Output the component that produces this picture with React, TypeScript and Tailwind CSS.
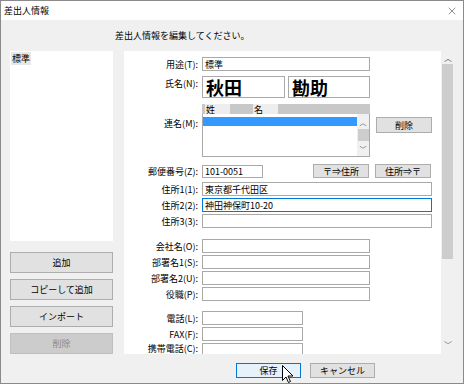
import { X } from "lucide-react";

const font = { fontFamily: '"Noto Sans CJK JP", "Noto Sans", sans-serif' };

function Field({
  label,
  width,
  value,
  focused,
  mt,
  lift,
}: {
  label: string;
  width: string;
  value?: string;
  focused?: boolean;
  mt: string;
  lift?: boolean;
}) {
  return (
    <div className={`flex items-center h-[14px] ${mt}`}>
      <div
        className={`w-[76px] text-right pr-[2px] leading-none ${
          lift ? "-mt-[3px]" : ""
        }`}
      >
        {label}
      </div>
      <div
        className={`h-[14px] ml-[2px] bg-white border px-[2px] flex items-center leading-none ${width} ${
          focused ? "border-[#0078d7]" : "border-[#a9a9a9]"
        }`}
      >
        {value}
      </div>
    </div>
  );
}

function Btn({ label, cls }: { label: string; cls: string }) {
  return (
    <div
      className={`flex items-center justify-center border leading-none ${cls}`}
    >
      {label}
    </div>
  );
}

export default function App() {
  return (
    <div
      style={font}
      className="relative w-[464px] h-[384px] border border-[#8a8a8a] flex flex-col text-[9px] text-black bg-[#f0f0f0] overflow-hidden"
    >
      <div className="h-[19px] bg-white flex items-center justify-between pl-[3px] pr-[5px]">
        <span className="text-[9px]">差出人情報</span>
        <X size={12} strokeWidth={1} color="#222" />
      </div>

      <div className="pl-[114px] pt-[10px] leading-[12px]">
        差出人情報を編集してください。
      </div>

      <div className="flex mt-[9px] pl-[9px] h-[303px]">
        <div className="w-[103px] flex flex-col">
          <div className="h-[190px] bg-white pt-[1px] pl-[1px]">
            <span className="bg-[#e8e8e8] px-[1px] leading-[10px]">標準</span>
          </div>
          <div className="flex flex-col gap-[6px] mt-[11px]">
            <Btn label="追加" cls="h-[21px] bg-[#e1e1e1] border-[#adadad]" />
            <Btn
              label="コピーして追加"
              cls="h-[21px] bg-[#e1e1e1] border-[#adadad]"
            />
            <Btn
              label="インポート"
              cls="h-[21px] bg-[#e1e1e1] border-[#adadad]"
            />
            <Btn
              label="削除"
              cls="h-[21px] bg-[#cccccc] border-[#bfbfbf] text-[#8a8a8a]"
            />
          </div>
        </div>

        <div className="ml-[11px] w-[334px] flex">
          <div className="w-[317px] bg-white overflow-hidden flex flex-col">
            <Field label="用途(T):" width="w-[168px]" value="標準" mt="mt-[6px]" />

            <div className="flex mt-[5px] h-[22px]">
              <div className="w-[76px] text-right pr-[2px] pt-[3px] leading-none">
                氏名(N):
              </div>
              <div className="ml-[2px] w-[83px] h-[22px] border border-[#a9a9a9] flex items-center pl-[3px] text-[18px] font-bold leading-none">
                秋田
              </div>
              <div className="ml-[3px] w-[82px] h-[22px] border border-[#a9a9a9] flex items-center pl-[3px] text-[18px] font-bold leading-none">
                勘助
              </div>
            </div>

            <div className="flex mt-[6px]">
              <div className="w-[76px] text-right pr-[2px] pt-[15px] leading-none">
                連名(M):
              </div>
              <div className="ml-[2px] w-[168px] flex flex-col">
                <div className="h-[10px] bg-[#c8c8c8] flex leading-none">
                  <div className="ml-[3px] w-[25px] bg-[#eeeeee] pl-[1px] flex items-center">
                    姓
                  </div>
                  <div className="ml-[23px] w-[25px] bg-[#eeeeee] pl-[1px] flex items-center">
                    名
                  </div>
                </div>
                <div className="h-[43px] border border-[#a9a9a9] border-t-0 flex">
                  <div className="flex-1 pt-[3px]">
                    <div className="h-[9px] bg-[#3399ff]" />
                  </div>
                  <div className="w-[12px] bg-[#f0f0f0] flex flex-col items-center text-[#606060]">
                    <span className="text-[7px] leading-[9px] mt-[4px]">︿</span>
                    <div className="w-[11px] h-[12px] bg-[#cdcdcd] mt-[2px]" />
                    <span className="text-[7px] leading-[9px] mt-[4px]">﹀</span>
                  </div>
                </div>
              </div>
              <Btn
                label="削除"
                cls="ml-[6px] mt-[13px] w-[56px] h-[16px] bg-[#e1e1e1] border-[#adadad]"
              />
            </div>

            <div className="flex items-center mt-[7px] h-[14px]">
              <div className="w-[76px] text-right pr-[2px] leading-none">
                郵便番号(Z):
              </div>
              <div className="ml-[2px] w-[61px] h-[13px] bg-white border border-[#a9a9a9] px-[2px] flex items-center leading-none">
                101-0051
              </div>
              <Btn
                label="〒⇒住所"
                cls="ml-[50px] w-[56px] h-[14px] bg-[#e1e1e1] border-[#adadad]"
              />
              <Btn
                label="住所⇒〒"
                cls="ml-[6px] w-[56px] h-[14px] bg-[#e1e1e1] border-[#adadad]"
              />
            </div>

            <Field
              label="住所1(1):"
              width="w-[230px]"
              value="東京都千代田区"
              mt="mt-[4px]"
            />
            <Field
              label="住所2(2):"
              width="w-[230px]"
              value="神田神保町10-20"
              focused
              mt="mt-[2px]"
            />
            <Field label="住所3(3):" width="w-[230px]" mt="mt-[2px]" />

            <Field label="会社名(O):" width="w-[168px]" mt="mt-[11px]" />
            <Field label="部署名1(S):" width="w-[168px]" mt="mt-[2px]" />
            <Field label="部署名2(U):" width="w-[168px]" mt="mt-[2px]" />
            <Field label="役職(P):" width="w-[168px]" mt="mt-[2px]" />

            <Field label="電話(L):" width="w-[101px]" mt="mt-[10px]" />
            <Field label="FAX(F):" width="w-[101px]" mt="mt-[2px]" />
            <Field
              label="携帯電話(C):"
              width="w-[101px]"
              mt="mt-[2px]"
              lift
            />
          </div>
          <div className="w-[17px] bg-[#f0f0f0] flex flex-col items-start">
            <span className="ml-[3px] mt-[3px] text-[8px] leading-[8px] text-[#606060]">
              ︿
            </span>
            <div className="ml-[1px] mt-[2px] w-[11px] h-[195px] bg-[#cdcdcd]" />
            <div className="flex-1" />
            <span className="ml-[3px] mb-[5px] text-[8px] leading-[8px] text-[#606060]">
              ﹀
            </span>
          </div>
        </div>
      </div>

      <div className="flex mt-[9px] pl-[235px] gap-[9px]">
        <Btn
          label="保存"
          cls="w-[65px] h-[15px] bg-[#e5f1fb] border-[#0078d7]"
        />
        <Btn
          label="キャンセル"
          cls="w-[65px] h-[15px] bg-[#e1e1e1] border-[#adadad]"
        />
      </div>

      <svg
        className="absolute left-[281px] top-[364px]"
        width="12"
        height="19"
        viewBox="0 0 12 19"
      >
        <path
          d="M0.5 0.5 L0.5 15.5 L4 12 L6.5 17.5 L8.5 16.5 L6 11 L11 11 Z"
          fill="white"
          stroke="black"
          strokeWidth="1"
        />
      </svg>
    </div>
  );
}
